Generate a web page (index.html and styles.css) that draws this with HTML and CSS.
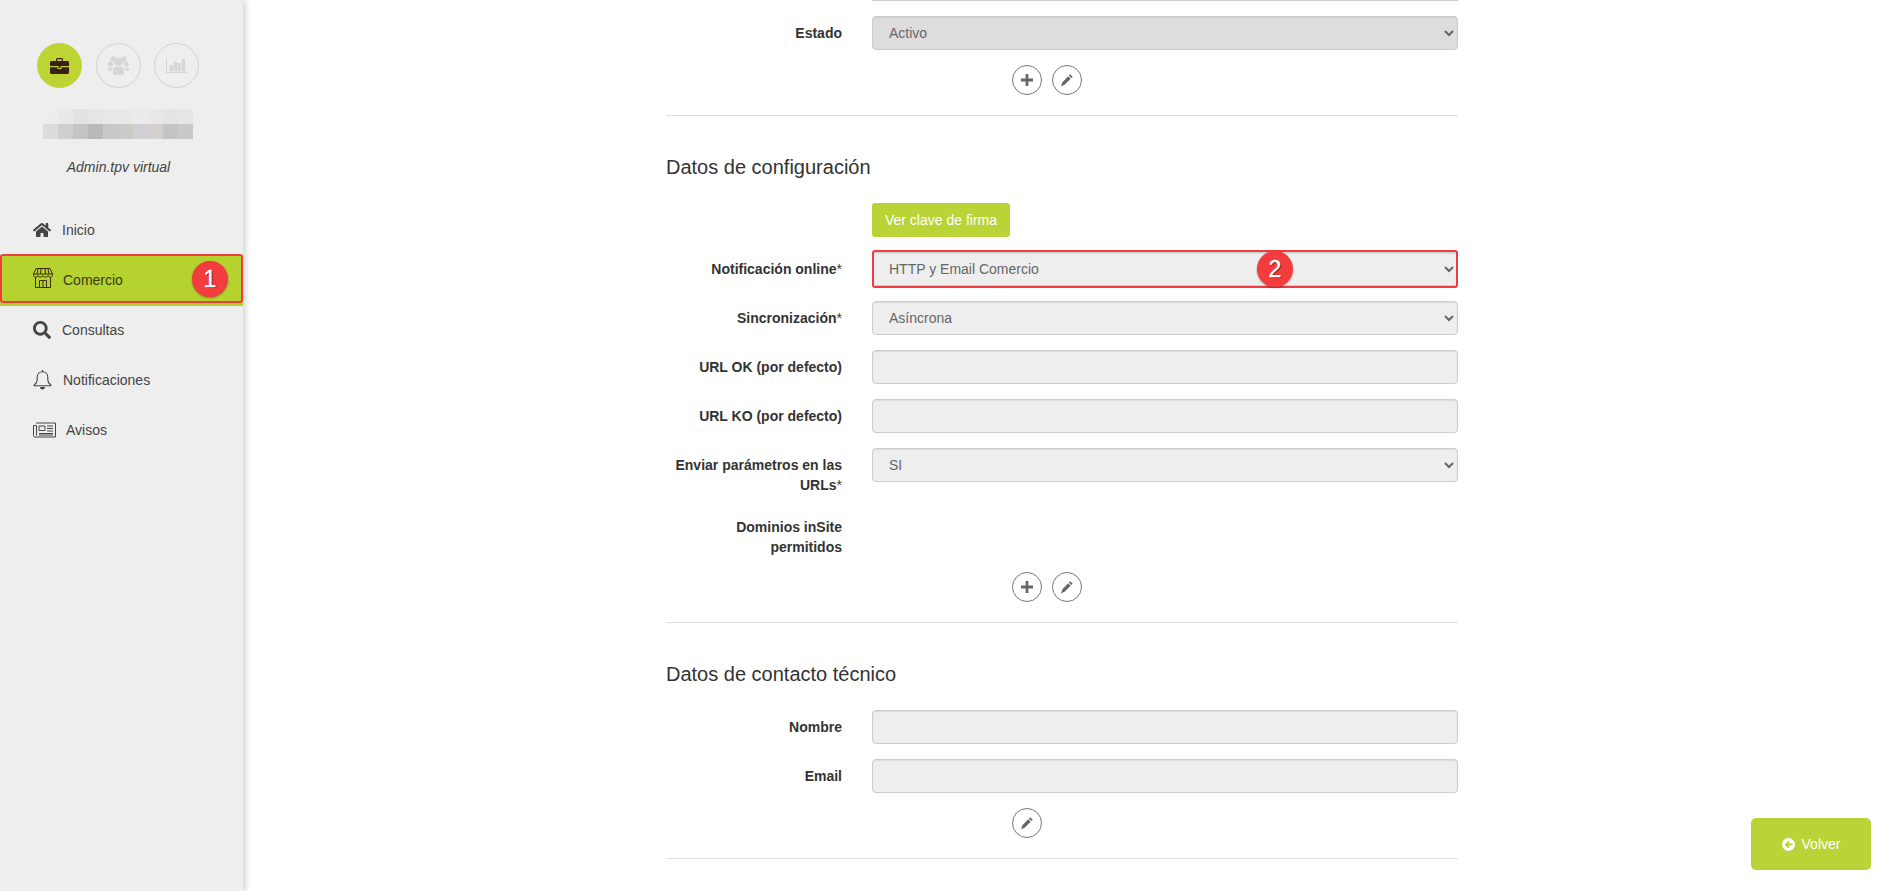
FILE: index.html
```html
<!DOCTYPE html>
<html lang="es">
<head>
<meta charset="utf-8">
<title>Comercio</title>
<link rel="stylesheet" href="styles.css">
</head>
<body>
<aside class="sidebar">
  <div class="tabs">
    <span class="tab tab-on">
      <svg width="19" height="16" viewBox="0 0 19 16"><path fill="#3a1f14" d="M6 3V1.600C6 .7 6.700 0 7.600 0h3.800C12.300 0 13 .7 13 1.600V3h4.500C18.300 3 19 3.700 19 4.500V8H0V4.500C0 3.700.7 3 1.500 3zm1.200 0h4.600V1.200H7.200zM0 9.300h7.500V11h4V9.300H19v5.200c0 .8-.7 1.500-1.500 1.500h-16C.7 16 0 15.300 0 14.500zM8.500 8h2v2h-2z"/></svg>
    </span>
    <span class="tab">
      <svg width="21" height="19" viewBox="0 0 21 19"><g fill="#d6d6d6"><circle cx="2.700" cy="8" r="2.500"/><circle cx="18.300" cy="8" r="2.500"/><circle cx="5.200" cy="3" r="2.700"/><circle cx="15.800" cy="3" r="2.700"/><circle cx="10.500" cy="6" r="4.300"/><path d="M0 11.500h3.500V15H1.500C.6 15 0 14.400 0 13.500zM17.500 11.500H21v2c0 .9-.6 1.500-1.500 1.500h-2zM5 13c0-1.200 1-2 2-2h7c1 0 2 .8 2 2v4c0 1.300-1 2-2 2H7c-1 0-2-.7-2-2z"/></g></svg>
    </span>
    <span class="tab">
      <svg width="21" height="15" viewBox="0 0 21 15"><g fill="#d6d6d6"><path d="M0 0h1v14h20v1H0z"/><rect x="3.700" y="7" width="3.300" height="6.500"/><rect x="7.700" y="3.300" width="3.300" height="10.200"/><rect x="11.400" y="5" width="3.300" height="8.500"/><rect x="15.700" y="1" width="3.300" height="12.500"/></g></svg>
    </span>
  </div>
  <svg class="blur" width="150" height="30" viewBox="0 0 150 30" shape-rendering="crispEdges">
    <rect x="0" width="15" height="15" fill="#ededed"/><rect x="15" width="15" height="15" fill="#e9e9e8"/><rect x="30" width="15" height="15" fill="#e2e2e2"/><rect x="45" width="15" height="15" fill="#e5e5e5"/><rect x="60" width="15" height="15" fill="#e8e8e8"/><rect x="75" width="15" height="15" fill="#e8e8e8"/><rect x="90" width="15" height="15" fill="#ebebeb"/><rect x="105" width="15" height="15" fill="#e8e8e8"/><rect x="120" width="15" height="15" fill="#e4e4e4"/><rect x="135" width="15" height="15" fill="#e6e6e6"/>
    <rect x="0" y="15" width="15" height="15" fill="#dcdcdb"/><rect x="15" y="15" width="15" height="15" fill="#d0cfce"/><rect x="30" y="15" width="15" height="15" fill="#c4c4c4"/><rect x="45" y="15" width="15" height="15" fill="#b9b9b9"/><rect x="60" y="15" width="15" height="15" fill="#c8c8c8"/><rect x="75" y="15" width="15" height="15" fill="#ccc9c7"/><rect x="90" y="15" width="15" height="15" fill="#cfd0d6"/><rect x="105" y="15" width="15" height="15" fill="#d5d0cd"/><rect x="120" y="15" width="15" height="15" fill="#c4c4c4"/><rect x="135" y="15" width="15" height="15" fill="#c9c9cc"/>
  </svg>
  <p class="role">Admin.tpv virtual</p>
  <nav class="menu">
    <a class="item">
      <svg class="ico" width="18" height="16" viewBox="0 0 576 512"><path fill="#444" d="M280.370 148.260L96 300.110V464a16 16 0 0 0 16 16l112.060-.29a16 16 0 0 0 15.920-16V368a16 16 0 0 1 16-16h64a16 16 0 0 1 16 16v95.640a16 16 0 0 0 16 16.050L464 480a16 16 0 0 0 16-16V300L295.670 148.260a12.190 12.190 0 0 0-15.300 0zM571.600 251.470L488 182.560V44.050a12 12 0 0 0-12-12h-56a12 12 0 0 0-12 12v72.610L318.470 43a48 48 0 0 0-61 0L4.340 251.470a12 12 0 0 0-1.600 16.900l25.500 31A12 12 0 0 0 45.150 301l235.220-193.740a12.190 12.190 0 0 1 15.300 0L530.900 301a12 12 0 0 0 16.900-1.600l25.500-31a12 12 0 0 0-1.700-16.930z"/></svg>
      <span>Inicio</span>
    </a>
    <a class="item item-on">
      <svg class="ico ico-shop" width="20" height="20" viewBox="0 0 20 20" fill="none" stroke="#3d2c10" stroke-width="1"><path d="M3 .5h14M3 .5L.5 6v1.500c0 1 1 1.500 2 1.500s2.200-.5 2.300-1.500c.2 1 1.300 1.500 2.300 1.500S9.800 8.500 10 7.500c.2 1 1.200 1.500 2.300 1.500s2.700-.5 2.900-1.500c.1 1 1.300 1.500 2.300 1.500s2-.5 2-1.500V6L17 .5M.5 6h19M5 1l-1 5M8 1l-.5 5M12 1l.5 5M15 1l1 5M2.500 9v10.500h15V9M6.500 19V12.500h7V19M10 12.500V19"/></svg>
      <span>Comercio</span>
      <span class="mark mark-item"></span>
      <span class="badge badge-1">1</span>
    </a>
    <a class="item">
      <svg class="ico" width="18" height="18" viewBox="0 0 512 512"><path fill="#444" d="M505 442.700L405.300 343c-4.500-4.500-10.600-7-17-7H372c27.600-35.300 44-79.700 44-128C416 93.100 322.900 0 208 0S0 93.100 0 208s93.100 208 208 208c48.300 0 92.700-16.400 128-44v16.300c0 6.400 2.500 12.500 7 17l99.700 99.700c9.400 9.400 24.600 9.400 33.900 0l28.300-28.300c9.400-9.400 9.400-24.600.1-34zM208 336c-70.700 0-128-57.200-128-128 0-70.700 57.200-128 128-128 70.700 0 128 57.200 128 128 0 70.700-57.200 128-128 128z"/></svg>
      <span>Consultas</span>
    </a>
    <a class="item">
      <svg class="ico" width="19" height="20" viewBox="0 0 19 20" fill="none" stroke="#444" stroke-width="1.100"><path d="M9.500 1.800c-3.300 0-5.300 2.500-5.300 5.500v2.700c0 2.200-1.200 3.700-3 5v.7h16.600V15c-1.800-1.300-3-2.800-3-5V7.300c0-3-2-5.500-5.300-5.500zM9.500 0v1.800"/><path fill="#444" stroke="none" d="M7 17h5c0 1.500-1 2.500-2.500 2.500S7 18.500 7 17z"/></svg>
      <span>Notificaciones</span>
    </a>
    <a class="item">
      <svg class="ico ico-news" width="23" height="16" viewBox="0 0 23 16" fill="none" stroke="#444" stroke-width="1"><path d="M3.500 1.500V1h19v14H2c-1 0-1.500-.6-1.500-1.500V3.500h3v10"/><path d="M6 4h6v4.500H6z"/><path d="M14 4h6M14 6.500h6M14 9h6M6 11.500h14M6 13h14"/></svg>
      <span>Avisos</span>
    </a>
  </nav>
</aside>

<main class="content">
  <div class="field-edge"></div>
  <div class="row">
    <label class="lbl">Estado</label>
    <select class="ctl ctl-dark"><option>Activo</option></select>
  </div>
  <div class="actions">
    <span class="round"><svg width="12" height="12" viewBox="0 0 12 12"><path fill="#666" d="M4.600 0h2.800v4.600H12v2.800H7.400V12H4.600V7.400H0V4.600h4.600z"/></svg></span>
    <span class="round"><svg width="12" height="13" viewBox="0 0 12 13"><path fill="#666" d="M9.200.3l2.500 2.500-1.300 1.300-2.500-2.500zM7.200 2.300l2.500 2.500-5.800 5.800-3.900 2 1.400-4.300z"/></svg></span>
  </div>
  <hr class="sep">

  <h2 class="title">Datos de configuración</h2>
  <div class="row row-btn"><span></span><div><button class="btn">Ver clave de firma</button></div></div>
  <div class="row">
    <label class="lbl">Notificación online<i>*</i></label>
    <div class="ctl-wrap">
      <select class="ctl"><option>HTTP y Email Comercio</option></select>
      <span class="mark mark-ctl"></span>
      <span class="badge badge-2">2</span>
    </div>
  </div>
  <div class="row">
    <label class="lbl">Sincronización<i>*</i></label>
    <select class="ctl"><option>Asíncrona</option></select>
  </div>
  <div class="row">
    <label class="lbl">URL OK (por defecto)</label>
    <input class="ctl" type="text">
  </div>
  <div class="row">
    <label class="lbl">URL KO (por defecto)</label>
    <input class="ctl" type="text">
  </div>
  <div class="row">
    <label class="lbl">Enviar parámetros en las URLs<i>*</i></label>
    <select class="ctl"><option>SI</option></select>
  </div>
  <div class="row">
    <label class="lbl">Dominios inSite permitidos</label>
    <span></span>
  </div>
  <div class="actions">
    <span class="round"><svg width="12" height="12" viewBox="0 0 12 12"><path fill="#666" d="M4.600 0h2.800v4.600H12v2.800H7.400V12H4.600V7.400H0V4.600h4.600z"/></svg></span>
    <span class="round"><svg width="12" height="13" viewBox="0 0 12 13"><path fill="#666" d="M9.200.3l2.500 2.500-1.300 1.300-2.500-2.500zM7.200 2.300l2.500 2.500-5.800 5.800-3.900 2 1.400-4.300z"/></svg></span>
  </div>
  <hr class="sep">

  <h2 class="title">Datos de contacto técnico</h2>
  <div class="row row-btn">
    <label class="lbl">Nombre</label>
    <input class="ctl" type="text">
  </div>
  <div class="row">
    <label class="lbl">Email</label>
    <input class="ctl" type="text">
  </div>
  <div class="actions">
    <span class="round"><svg width="12" height="13" viewBox="0 0 12 13"><path fill="#666" d="M9.200.3l2.500 2.500-1.300 1.300-2.500-2.500zM7.200 2.300l2.500 2.500-5.800 5.800-3.900 2 1.400-4.300z"/></svg></span>
  </div>
  <hr class="sep">
</main>

<a class="back">
  <svg width="13" height="13" viewBox="0 0 13 13"><circle cx="6.500" cy="6.500" r="6.500" fill="#fff"/><path fill="#bad336" d="M2.500 6.500L6.300 2.700l1.300 1.300-1.500 1.500h4.400v2H6.100l1.500 1.500-1.300 1.300z"/></svg>
  <span>Volver</span>
</a>
</body>
</html>
```
FILE: styles.css
```css
* { box-sizing: border-box; }
html, body { height: 100%; }
body {
  margin: 0;
  display: flex;
  overflow: hidden;
  background: #fff;
  font-family: "Liberation Sans", Arial, sans-serif;
  font-size: 14px;
  color: #333;
}

/* sidebar */
.sidebar {
  flex: 0 0 243px;
  height: 891px;
  background: #eee;
  box-shadow: 3px 0 6px rgba(0, 0, 0, .16);
  padding-top: 43px;
}
.tabs { display: flex; gap: 13px; padding-left: 37px; }
.tab {
  width: 45px;
  height: 45px;
  border: 1px solid #d2d2d2;
  border-radius: 50%;
  display: flex;
  align-items: center;
  justify-content: center;
}
.tab-on { background: #bdd433; border-color: #bdd433; margin-right: 1px; }
.blur { display: block; margin: 21px 0 0 43px; }
.role {
  margin: 18px 0 0;
  padding-right: 6px;
  text-align: center;
  font-size: 14px;
  line-height: 20px;
  font-style: italic;
  color: #444;
}
.menu { margin-top: 28px; display: flex; flex-direction: column; }
.item {
  position: relative;
  height: 50px;
  display: flex;
  align-items: center;
  padding-left: 33px;
  gap: 11px;
  color: #444;
  font-size: 14px;
}
.item-on { background: #b5d22f; color: #3a3a10; gap: 10px; box-shadow: 0 1px 0 #b5d22f; }
.ico-news { margin-right: -1px; }
.ico-shop { margin-top: -5px; }

/* annotations */
.mark {
  position: absolute;
  border: 2px solid #ef3c42;
  border-radius: 3px;
  pointer-events: none;
}
.mark-item { left: 0; right: 0; top: -1px; bottom: 2px; }
.mark-ctl { left: 0; right: 0; top: -2px; bottom: -2px; }
.badge {
  position: absolute;
  width: 36px;
  height: 36px;
  border-radius: 50%;
  background: #f43b3e;
  color: #fff;
  font-size: 23px;
  line-height: 36px;
  text-align: center;
  -webkit-text-stroke: .4px #fff;
  text-shadow: 1px 1px 0 rgba(60, 0, 0, .6);
  box-shadow: 0 1px 2px rgba(0, 0, 0, .35);
}
.badge-1 { left: 192px; top: 6px; }
.badge-2 { left: 385px; top: -1px; }

/* form */
.content { flex: 0 0 792px; margin-left: 423px; height: 891px; }
.field-edge { height: 1px; margin-left: 206px; background: #ccc; margin-bottom: 15px; }
.row {
  display: grid;
  grid-template-columns: 176px 586px;
  column-gap: 30px;
  margin-bottom: 15px;
}
.lbl {
  text-align: right;
  font-weight: 700;
  font-size: 14px;
  line-height: 20px;
  padding-top: 7px;
  color: #333;
}
.lbl i { font-weight: 400; font-style: normal; }
.ctl-wrap { position: relative; }
.ctl {
  display: block;
  width: 100%;
  height: 34px;
  padding: 0 12px;
  border: 1px solid #ccc;
  border-radius: 4px;
  background-color: #eee;
  color: #666;
  font-family: inherit;
  font-size: 14px;
  box-shadow: inset 0 1px 1px rgba(0, 0, 0, .075);
}
.ctl-dark { background-color: #ddd; }
.actions {
  display: flex;
  gap: 10px;
  padding-left: 346px;
}
.round {
  width: 30px;
  height: 30px;
  border: 1px solid #777;
  border-radius: 50%;
  display: flex;
  align-items: center;
  justify-content: center;
  background: #fff;
}
.sep { border: 0; border-top: 1px solid #ddd; margin: 20px 0 0; }
.title {
  margin: 40px 0 0;
  font-weight: 400;
  font-size: 20px;
  line-height: 22px;
  color: #333;
}
.row-btn { margin-top: 25px; }
.btn {
  display: block;
  height: 34px;
  width: 138px;
  border: 0;
  border-radius: 3px;
  background: #bad336;
  color: #fff;
  font-family: inherit;
  font-size: 14px;
  padding: 0;
}
.back {
  position: fixed;
  left: 1751px;
  top: 818px;
  width: 120px;
  height: 52px;
  border-radius: 5px;
  background: #bad336;
  color: #fff;
  font-size: 14px;
  display: flex;
  align-items: center;
  justify-content: center;
  gap: 7px;
}
```
